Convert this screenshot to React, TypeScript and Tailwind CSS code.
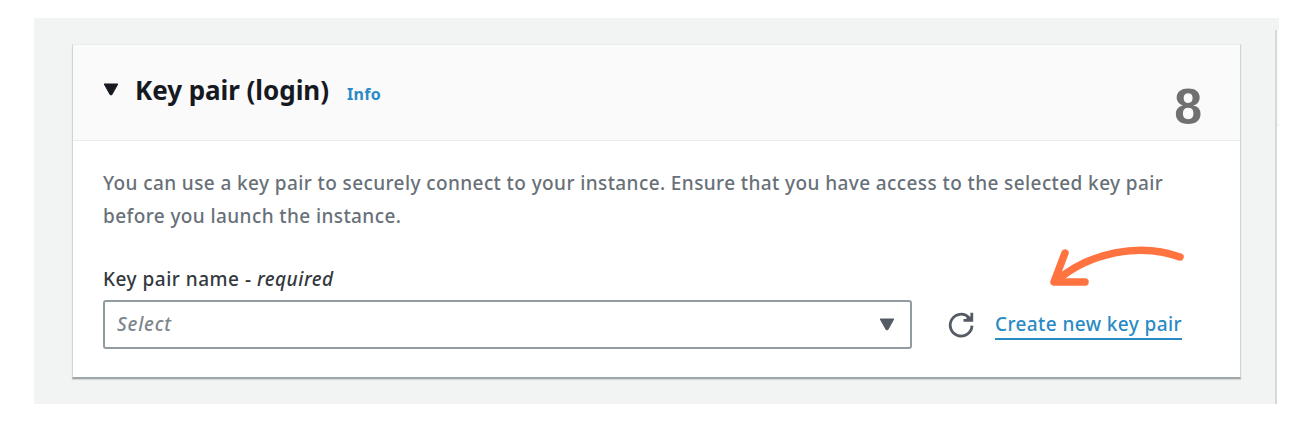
import React from "react";

function Caret({ className }: { className: string }) {
  return (
    <svg viewBox="0 0 16 13" width="16" height="13" className={className} aria-hidden="true">
      <path d="M1.2 1H14.8L8.8 11.8H7.2Z" fill="currentColor" stroke="currentColor" strokeWidth="1" strokeLinejoin="round" />
    </svg>
  );
}

export default function App() {
  return (
    <div className="h-[423px] w-[1310px] overflow-hidden bg-white pt-[18px] pl-[34px] font-['Noto_Sans',sans-serif]">
      <div className="flex h-[386px] w-[1245px] bg-[#f2f4f4]">
        <section className="mt-[26px] ml-[38px] h-[335px] w-[1169px] shrink-0 border-x border-t border-b-2 border-x-[#d0d4d5] border-t-[#eaeded] border-b-[#a0a7ab] bg-white shadow-[0_1px_1px_rgba(0,28,36,0.12)]">
          <header className="flex h-[96px] items-start justify-between border-b border-[#eaeded] bg-[#fafafa] pr-[38px] pl-[30px]">
            <div className="flex items-baseline pt-[25px] leading-[40px]">
              <Caret className="mr-[16px] -translate-y-[4px] text-[#16191f]" />
              <h2 className="w-[196px] text-[26px] font-bold tracking-[-0.05px] whitespace-nowrap text-[#16191f]">Key pair (login)</h2>
              <a className="ml-[16px] text-[16px] font-bold tracking-[0.3px] whitespace-nowrap text-[#2a8ac4]">Info</a>
            </div>
            <span className="pt-[37px] font-['Liberation_Sans',sans-serif] text-[50px] leading-[50px] font-bold text-[#707070]">8</span>
          </header>
          <div className="pt-[26px] pl-[30px]">
            <p className="text-[19px] leading-[33px] font-medium tracking-[0.4px] whitespace-nowrap text-[#687078]">
              You can use a key pair to securely connect to your instance. Ensure that you have access to the selected key pair
              <br />
              before you launch the instance.
            </p>
            <div className="mt-[30px] text-[19px] leading-[33px] font-medium tracking-[0.5px] whitespace-nowrap text-[#33383e]">
              Key pair name - <em>required</em>
            </div>
            <div className="mt-[4px] flex h-[49px] items-center">
              <div className="flex h-[49px] w-[809px] items-center justify-between rounded-[3px] border-2 border-[#929ba0] pr-[15px] pl-[12px] text-[#545b64]">
                <em className="text-[19px] font-medium tracking-[0.8px] text-[#7d868c]">Select</em>
                <Caret className="text-[#545b64]" />
              </div>
              <svg className="ml-[35px] shrink-0" width="28" height="28" viewBox="0 0 28 28" fill="none" stroke="#545b64" strokeWidth="2.8" aria-hidden="true">
                <path d="M25 14.6A10.9 10.9 0 1 1 22 6.6" />
                <path d="M24.8 1.8V9.4H16.5M19.5 7.2H23.6" />
              </svg>
              <div className="relative ml-[20px] h-[30px] w-[187px] border-b-2 border-[#2a8ac4] text-[19px] leading-[28px] font-medium tracking-[0.4px] whitespace-nowrap text-[#2a8ac4]">
                Create new key pair
                <svg className="absolute -top-[67px] left-[50px]" width="144" height="48" viewBox="0 0 144 48" fill="none" stroke="#ff7340" strokeLinecap="round" strokeLinejoin="round" aria-hidden="true">
                  <path d="M135 14C94 -1 44 10 11 38" strokeWidth="7.5" />
                  <path d="M20 10L9 39H40" strokeWidth="7.5" />
                </svg>
              </div>
            </div>
          </div>
        </section>
        <div className="mt-[12px] ml-[34px] h-[374px] w-[4px] border-l-2 border-[#d5d9da] bg-white">
          <div className="h-[96px] border-b border-[#eaeded] bg-[#fafafa]" />
        </div>
      </div>
    </div>
  );
}
